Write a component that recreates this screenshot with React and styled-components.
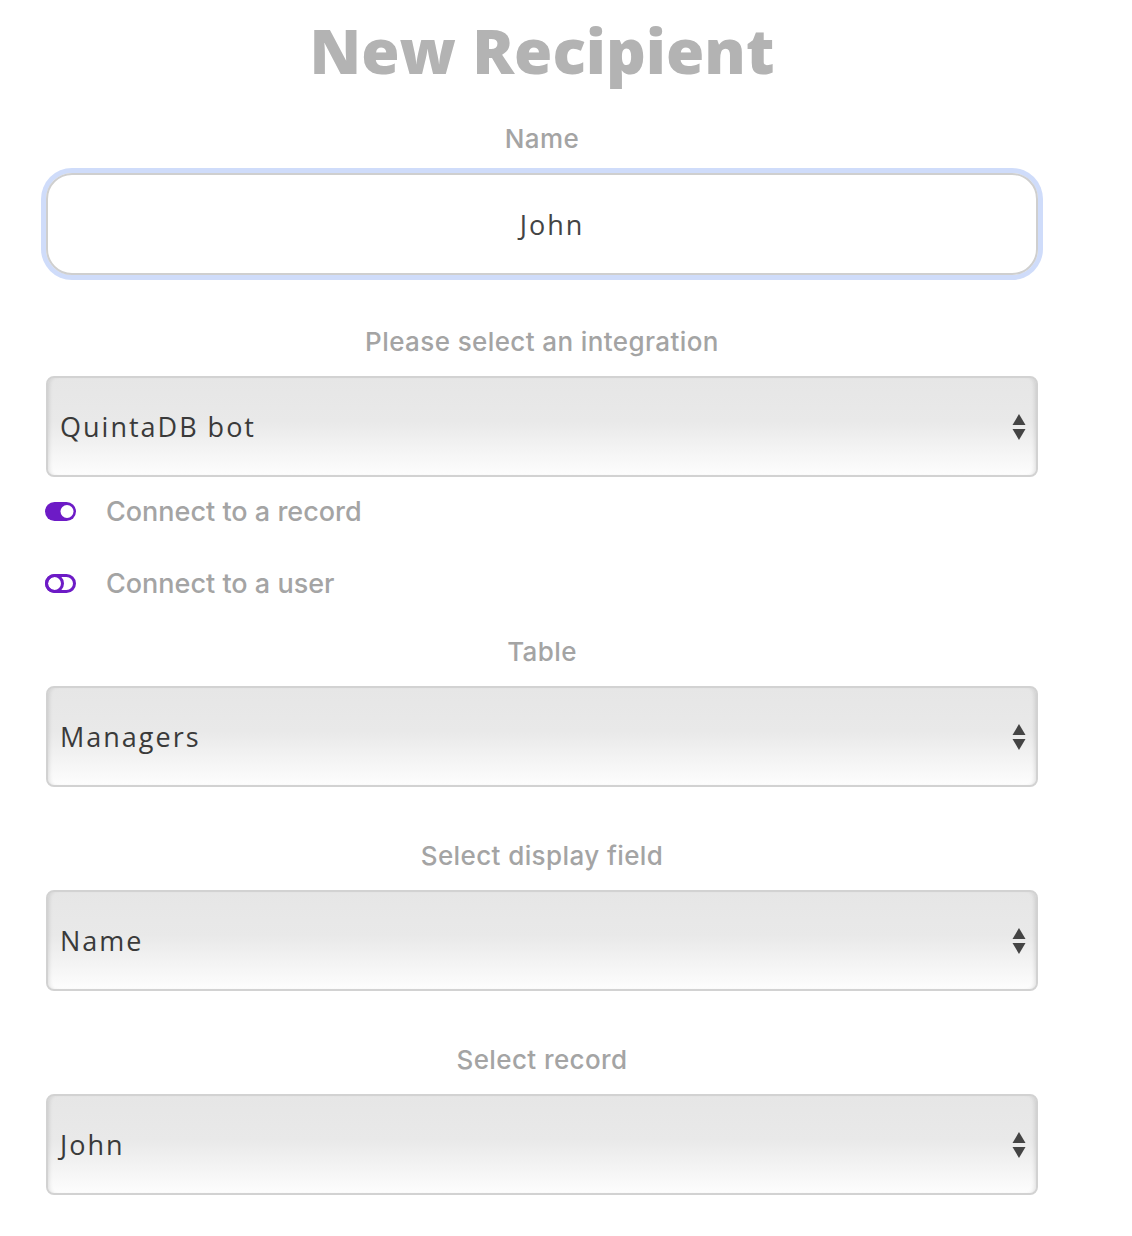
import React from 'react';
import styled, { createGlobalStyle } from 'styled-components';

const GlobalStyle = createGlobalStyle`
  body {
    margin: 0;
    background: #fff;
    font-family: Inter, "Liberation Sans", Arial, sans-serif;
  }
`;

const Page = styled.div`
  width: 992px;
  padding: 12px 0 40px 46px;
`;

const Title = styled.h1`
  margin: 0 0 36px;
  text-align: center;
  font-family: "Open Sans", sans-serif;
  font-weight: 800;
  font-size: 62px;
  line-height: 76px;
  color: #b3b3b3;
`;

const Label = styled.div`
  text-align: center;
  font-family: Inter, "Liberation Sans", Arial, sans-serif;
  font-weight: 500;
  font-size: 26px;
  letter-spacing: 0.4px;
  line-height: 30px;
  color: #a4a4a4;
  margin-bottom: 19px;
`;

const TextInput = styled.div`
  box-sizing: border-box;
  height: 102px;
  padding-left: 20px;
  border: 2px solid #cfcfcf;
  border-radius: 26px;
  box-shadow: 0 0 0 5px #cfdcfa;
  display: flex;
  align-items: center;
  justify-content: center;
  font-family: "Open Sans", sans-serif;
  font-size: 27px;
  letter-spacing: 2px;
  color: #444;
  margin-bottom: 52px;
`;

const Select = styled.div`
  box-sizing: border-box;
  height: 101px;
  border: 2px solid #d2d2d2;
  border-radius: 8px;
  background: linear-gradient(#e6e6e6 0%, #e9e9e9 45%, #f4f4f4 75%, #fdfdfd 100%);
  box-shadow: inset 4px 0 4px -3px rgba(0, 0, 0, 0.12), inset -4px 0 4px -3px rgba(0, 0, 0, 0.12);
  display: flex;
  align-items: center;
  justify-content: space-between;
  padding: 0 10px 0 12px;
  font-family: "Open Sans", sans-serif;
  font-size: 27px;
  letter-spacing: 2px;
  color: #3a3a3a;
  margin-bottom: ${(p) => (p.$last ? '0' : '54px')};
`;

const Arrows = styled.svg`
  width: 14px;
  height: 26px;
  flex-shrink: 0;
`;

const Toggles = styled.div`
  display: flex;
  flex-direction: column;
  gap: 36px;
  margin: 16px 0 36px -1px;
`;

const ToggleRow = styled.div`
  display: flex;
  align-items: center;
  gap: 30px;
  height: 36px;
  font-family: Inter, "Liberation Sans", Arial, sans-serif;
  font-weight: 500;
  font-size: 27px;
  color: #a4a4a4;
`;

const ToggleIcon = styled.svg`
  width: 31px;
  height: 19px;
  flex-shrink: 0;
`;

function SelectBox({ value, last }) {
  return (
    <Select $last={last}>
      <span>{value}</span>
      <Arrows viewBox="0 0 14 26">
        <path d="M7 0 L13.5 11 L0.5 11 Z" fill="#444" />
        <path d="M0.5 15 L13.5 15 L7 26 Z" fill="#444" />
      </Arrows>
    </Select>
  );
}

function Toggle({ on }) {
  return (
    <ToggleIcon viewBox="0 0 31 19">
      {on ? (
        <>
          <rect x="0" y="0" width="31" height="19" rx="9.5" fill="#6d1bc6" />
          <circle cx="22" cy="9.5" r="6.5" fill="#fff" />
        </>
      ) : (
        <>
          <rect x="1.5" y="1.5" width="28" height="16" rx="8" fill="none" stroke="#6d1bc6" strokeWidth="3" />
          <circle cx="9.5" cy="9.5" r="8" fill="none" stroke="#6d1bc6" strokeWidth="3" />
        </>
      )}
    </ToggleIcon>
  );
}

export default function App() {
  return (
    <>
      <GlobalStyle />
      <Page>
        <Title>New Recipient</Title>
        <Label>Name</Label>
        <TextInput>John</TextInput>
        <Label>Please select an integration</Label>
        <SelectBox value="QuintaDB bot" last />
        <Toggles>
          <ToggleRow>
            <Toggle on />
            Connect to a record
          </ToggleRow>
          <ToggleRow>
            <Toggle />
            Connect to a user
          </ToggleRow>
        </Toggles>
        <Label>Table</Label>
        <SelectBox value="Managers" />
        <Label>Select display field</Label>
        <SelectBox value="Name" />
        <Label>Select record</Label>
        <SelectBox value="John" last />
      </Page>
    </>
  );
}
